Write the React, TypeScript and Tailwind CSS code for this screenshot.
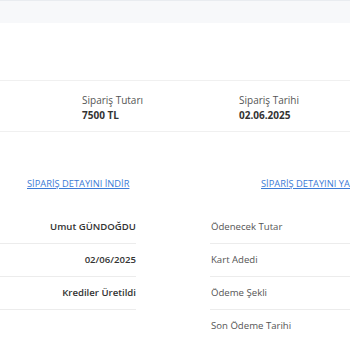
export default function App() {
  const leftRows = ['Umut GÜNDOĞDU', '02/06/2025', 'Krediler Üretildi']
  const rightRows = ['Ödenecek Tutar', 'Kart Adedi', 'Ödeme Şekli', 'Son Ödeme Tarihi']

  return (
    <div
      className="w-[350px] h-[350px] overflow-hidden bg-white text-[10px] text-[#333]"
      style={{ fontFamily: '"Open Sans", "Noto Sans", sans-serif' }}>
      {/* üst bant */}
      <div className="h-[23px] border-t border-[#e9ecf0] bg-[#f7f8fa]" />
      <div className="h-[58px] border-b border-[#f0f0f0]" />

      {/* sipariş özeti */}
      <div className="flex h-[51px] border-b border-[#f0f0f0] pt-[12px]">
        <div className="ml-[82px] w-[157px] shrink-0 flex flex-col">
          <span className="text-[#555] leading-[15px]">Sipariş Tutarı</span>
          <span className="font-bold leading-[15px]">7500 TL</span>
        </div>
        <div className="flex flex-col">
          <span className="text-[#555] leading-[15px]">Sipariş Tarihi</span>
          <span className="font-bold leading-[15px]">02.06.2025</span>
        </div>
      </div>

      {/* linkler (sağdaki ekranın kenarında kesiliyor) */}
      <div className="flex pt-[45px] h-[79px] whitespace-nowrap text-[9.3px]">
        <a href="#" className="ml-[27px] w-[234px] shrink-0 text-[#3b7ad6] underline">
          SİPARİŞ DETAYINI İNDİR
        </a>
        <a href="#" className="text-[#3b7ad6] underline">
          SİPARİŞ DETAYINI YAZDIR
        </a>
      </div>

      {/* detaylar */}
      <div className="flex text-[9.6px]">
        <div className="w-[136px] shrink-0 flex flex-col">
          {leftRows.map((r) => (
            <div
              key={r}
              className="h-[33px] flex items-center justify-end font-semibold border-b border-[#ececec]">
              {r}
            </div>
          ))}
        </div>
        <div className="ml-[74px] grow flex flex-col">
          {rightRows.map((r, i) => (
            <div
              key={r}
              className={`h-[33px] flex items-center pl-[1px] text-[#555] ${
                i < 3 ? 'border-b border-[#ececec]' : ''
              }`}>
              {r}
            </div>
          ))}
        </div>
      </div>
    </div>
  )
}
